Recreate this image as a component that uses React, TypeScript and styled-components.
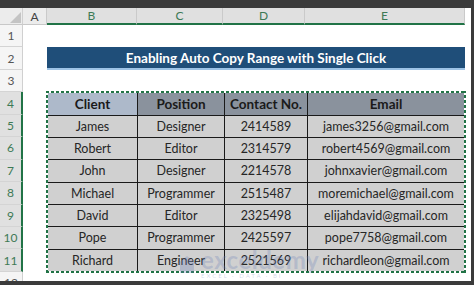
import styled, { createGlobalStyle } from "styled-components"

const GlobalStyle = createGlobalStyle`
    html, body {
        margin: 0;
        padding: 0;
        background: #3b3b3b;
    }
    body {
        font-family: "Lato", "Liberation Sans", sans-serif;
    }
`

const columns = ["B", "C", "D", "E"]
const headers = ["Client", "Position", "Contact No.", "Email"]
const rows = [
    ["James", "Designer", "2414589", "james3256@gmail.com"],
    ["Robert", "Editor", "2314579", "robert4569@gmail.com"],
    ["John", "Designer", "2214578", "johnxavier@gmail.com"],
    ["Michael", "Programmer", "2515487", "moremichael@gmail.com"],
    ["David", "Editor", "2325498", "elijahdavid@gmail.com"],
    ["Pope", "Programmer", "2425597", "pope7758@gmail.com"],
    ["Richard", "Engineer", "2521569", "richardleon@gmail.com"],
]

const App = () => {
    return (
        <>
            <GlobalStyle />
            <Frame>
                <Sheet>
                    <Corner>
                        <svg width="11" height="11" viewBox="0 0 11 11">
                            <path d="M11 0 L11 11 L0 11 Z" fill="#c4c4c4" />
                        </svg>
                    </Corner>
                    <ColHead>A</ColHead>
                    {columns.map((c) => (
                        <ColHead key={c} $selected>{c}</ColHead>
                    ))}
                    <Blank />

                    {Array.from({ length: 12 }, (_, i) => (
                        <RowHead key={i} $selected={i >= 3 && i <= 10} style={{ gridRow: i + 2 }}>
                            {i + 1}
                        </RowHead>
                    ))}

                    <Title>Enabling Auto Copy Range with Single Click</Title>

                    {/* copied range, marching ants drawn with gradients */}
                    <Selection>
                        <DataTable>
                            {headers.map((h, i) => (
                                <HeadCell key={h} $first={i === 0}>{h}</HeadCell>
                            ))}
                            {rows.map((r) =>
                                r.map((v, j) => <Cell key={r[0] + j}>{v}</Cell>)
                            )}
                        </DataTable>
                    </Selection>

                    <Watermark>
                        <svg width="22" height="20" viewBox="0 0 22 20">
                            <path d="M1 10 L11 2 L21 10 L18 10 L18 19 L4 19 L4 10 Z" fill="rgba(110,130,185,0.3)" />
                        </svg>
                        <MarkText>
                            <span>exceldemy</span>
                            <small>EXCEL · DATA · BI</small>
                        </MarkText>
                    </Watermark>
                </Sheet>
            </Frame>
        </>
    )
}

export default App

const Frame = styled.div`
    width: 474px;
    height: 285px;
    padding: 8px 3px 4px 0;
    box-sizing: border-box;
    background: #3b3b3b;
`

const Sheet = styled.div`
    position: relative;
    height: 273px;
    background: #ffffff;
    overflow: hidden;
    display: grid;
    grid-template-columns: 23px 24px 90px 86px 82px 160px 1fr;
    grid-template-rows: 17px repeat(12, 22.45px);
    font-family: "Lato", "Liberation Sans", sans-serif;
`

const Corner = styled.div`
    grid-row: 1;
    grid-column: 1;
    background: #ececec;
    border-right: 1px solid #d0d0d0;
    border-bottom: 1px solid #c8c8c8;
    display: flex;
    align-items: flex-end;
    justify-content: flex-end;
    padding: 0 1px 1px 0;
`

const ColHead = styled.div<{ $selected?: boolean }>`
    grid-row: 1;
    background: ${(p) => (p.$selected ? "#e0e0e0" : "#ececec")};
    color: ${(p) => (p.$selected ? "#3d7a55" : "#444")};
    border-right: 1px solid #cacaca;
    border-bottom: ${(p) => (p.$selected ? "2px solid #217346" : "1px solid #c8c8c8")};
    font-size: 12px;
    display: flex;
    align-items: center;
    justify-content: center;
`

const Blank = styled.div`
    grid-row: 1;
    grid-column: 7;
    background: #ffffff;
`

const RowHead = styled.div<{ $selected?: boolean }>`
    grid-column: 1;
    background: ${(p) => (p.$selected ? "#e0e0e0" : "#f5f5f5")};
    color: ${(p) => (p.$selected ? "#3d7a55" : "#555")};
    border-right: ${(p) => (p.$selected ? "2px solid #217346" : "1px solid #d0d0d0")};
    border-bottom: 1px solid #d4d4d4;
    font-size: 12px;
    display: flex;
    align-items: center;
    justify-content: center;
`

const Title = styled.div`
    grid-row: 3;
    grid-column: 3 / 7;
    background: #1f4e79;
    border-bottom: 2px solid #9dc3e6;
    color: #ffffff;
    font-weight: 700;
    font-size: 13.5px;
    display: flex;
    align-items: center;
    justify-content: center;
`

const Selection = styled.div`
    grid-row: 5 / 13;
    grid-column: 3 / 7;
    margin: -1px;
    padding: 2px;
    display: flex;
    background-color: #ffffff;
    background-image:
        repeating-linear-gradient(90deg, #217346 0 3px, transparent 3px 5px),
        repeating-linear-gradient(90deg, #217346 0 3px, transparent 3px 5px),
        repeating-linear-gradient(0deg, #217346 0 3px, transparent 3px 5px),
        repeating-linear-gradient(0deg, #217346 0 3px, transparent 3px 5px);
    background-size: 100% 2px, 100% 2px, 2px 100%, 2px 100%;
    background-position: top left, bottom left, top left, top right;
    background-repeat: no-repeat;
`

const DataTable = styled.div`
    flex: 1;
    display: grid;
    grid-template-columns: 89px 86px 82px 1fr;
    grid-auto-rows: 1fr;
    gap: 1px;
    background: #1a1a1a;
`

const HeadCell = styled.div<{ $first?: boolean }>`
    background: ${(p) => (p.$first ? "#adb9ca" : "#8a929d")};
    color: #1a1a1a;
    font-weight: 700;
    font-size: 13.5px;
    display: flex;
    align-items: center;
    justify-content: center;
`

const Cell = styled.div`
    background: #d0d0d0;
    color: #262626;
    font-size: 12.5px;
    display: flex;
    align-items: center;
    justify-content: center;
`

const Watermark = styled.div`
    position: absolute;
    left: 176px;
    top: 240px;
    display: flex;
    align-items: center;
    gap: 3px;
    pointer-events: none;
`

const MarkText = styled.div`
    display: flex;
    flex-direction: column;
    line-height: 1;

    span {
        font-size: 24px;
        font-weight: 700;
        color: rgba(110, 130, 185, 0.3);
        letter-spacing: 0.5px;
    }

    small {
        font-size: 6px;
        color: rgba(110, 130, 185, 0.3);
        letter-spacing: 2px;
        margin-top: 1px;
    }
`
